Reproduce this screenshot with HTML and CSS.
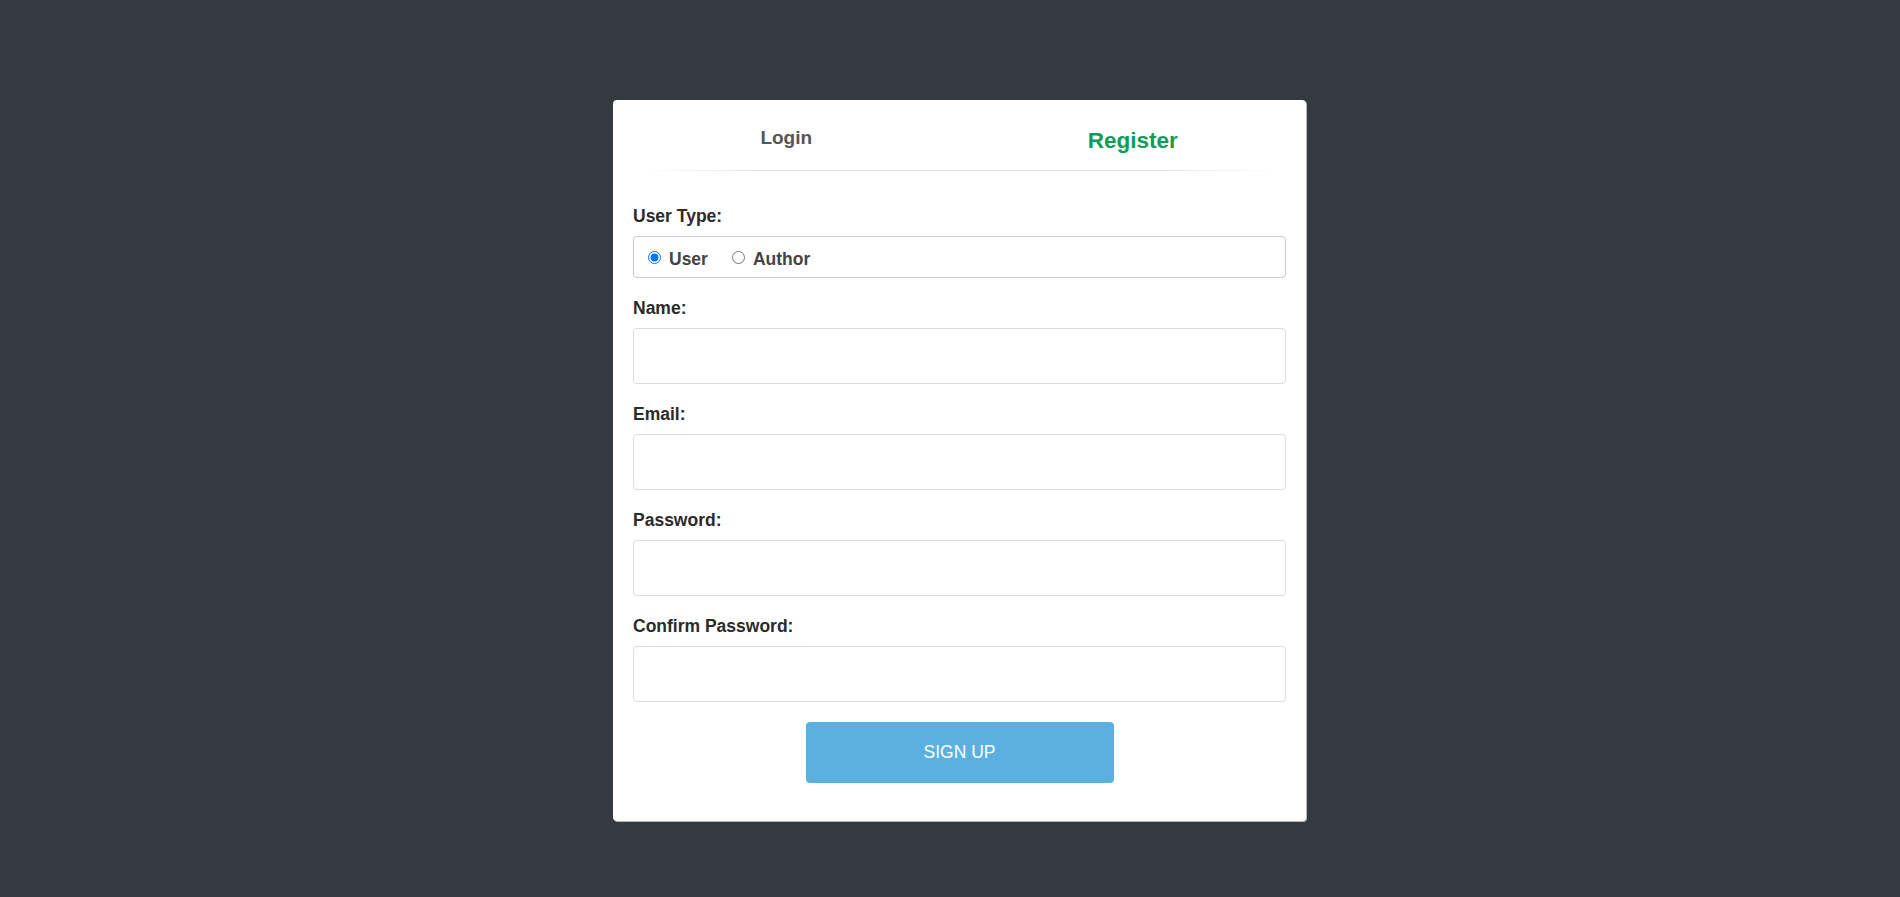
FILE: index.html
```html
<!DOCTYPE html>
<html lang="en">
<head>
<meta charset="utf-8">
<title>Register</title>
<link rel="stylesheet" href="styles.css">
</head>
<body>
<div class="page">
  <div class="card">
    <div class="tabs">
      <div class="tab tab-login">Login</div>
      <div class="tab tab-register">Register</div>
    </div>
    <form class="form">
      <div class="group">
        <label class="label">User Type:</label>
        <div class="radio-box">
          <label class="option"><input type="radio" name="type" checked><span>User</span></label>
          <label class="option option-author"><input type="radio" name="type"><span>Author</span></label>
        </div>
      </div>
      <div class="group">
        <label class="label">Name:</label>
        <input class="field" type="text">
      </div>
      <div class="group">
        <label class="label">Email:</label>
        <input class="field" type="email">
      </div>
      <div class="group">
        <label class="label">Password:</label>
        <input class="field" type="password">
      </div>
      <div class="group">
        <label class="label">Confirm Password:</label>
        <input class="field" type="password">
      </div>
      <div class="actions">
        <button class="btn" type="button">SIGN UP</button>
      </div>
    </form>
  </div>
</div>
</body>
</html>
```

FILE: styles.css
```css
* { box-sizing: border-box; }
html, body {
  margin: 0;
  padding: 0;
  background: #343a40;
  font-family: "Liberation Sans", Arial, sans-serif;
}
.page {
  min-height: 100vh;
  display: flex;
  justify-content: center;
  align-items: flex-start;
  padding: 100px 0 0 19px;
}
.card {
  width: 693px;
  background: #fff;
  border-radius: 4px;
  box-shadow: 1px 1px 0 #b8b8b8;
  padding-bottom: 38px;
}
.tabs {
  display: flex;
  height: 71px;
  position: relative;
}
.tabs::after {
  content: "";
  position: absolute;
  left: 30px;
  right: 30px;
  bottom: 0;
  height: 1px;
  background: linear-gradient(to right, rgba(224,224,224,0), #e4e4e4 18%, #e4e4e4 82%, rgba(224,224,224,0));
}
.tab {
  flex: 1;
  text-align: center;
  font-weight: bold;
  cursor: pointer;
}
.tab-login {
  font-size: 19px;
  color: #555;
  padding-top: 27px;
}
.tab-register {
  font-size: 22.5px;
  color: #0f9d58;
  padding-top: 28px;
}
.form {
  padding: 35px 20px 0;
  margin: 0;
}
.group {
  margin-bottom: 20px;
}
.label {
  display: block;
  font-size: 17.5px;
  line-height: 20px;
  font-weight: bold;
  color: #2b2b2b;
  margin-bottom: 10px;
}
.radio-box {
  height: 42px;
  border: 1px solid #cacaca;
  border-radius: 4px;
  display: flex;
  align-items: center;
  padding: 4px 14px 0;
}
.option {
  display: inline-flex;
  align-items: center;
  font-size: 17.5px;
  font-weight: bold;
  color: #444;
}
.option input {
  margin: 0 8px 3px 0;
  width: 13px;
  height: 13px;
}
.option-author {
  margin-left: 24px;
}
.field {
  display: block;
  width: 100%;
  height: 56px;
  border: 1px solid #dcdcdc;
  border-radius: 4px;
  font-size: 16px;
  padding: 0 12px;
  font-family: inherit;
}
.actions {
  display: flex;
  justify-content: center;
}
.btn {
  width: 308px;
  height: 61px;
  background: #5ab1df;
  color: #fff;
  border: none;
  border-radius: 4px;
  font-family: inherit;
  font-size: 17.5px;
}
```
